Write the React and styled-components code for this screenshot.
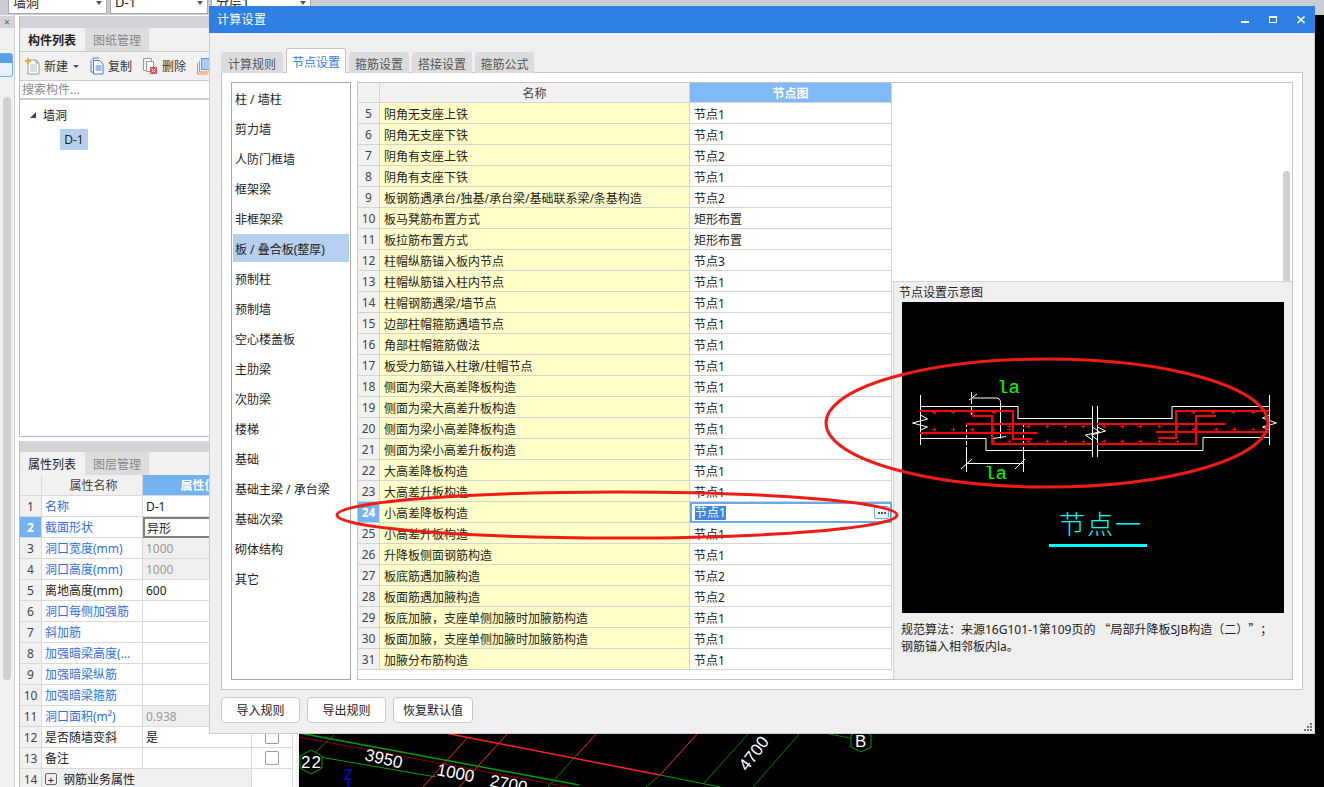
import React from "react";
import styled, { createGlobalStyle } from "styled-components";

const font = `"Noto Sans", "Noto Sans CJK SC", sans-serif`;
const cjk = `"Noto Sans CJK SC", sans-serif`;

const Global = createGlobalStyle`
  html, body { margin: 0; padding: 0; height: 100%; overflow: hidden; background: #fff; }
  * { box-sizing: border-box; }
  body { font: 12px ${font}; color: #222; }
`;

const Page = styled.div`
  position: relative;
  width: 1324px;
  height: 787px;
  overflow: hidden;
  background: #000;
  display: grid;
  grid-template-rows: 15px 1fr;
`;

const TopBar = styled.div`
  background: #c9ccd1;
  display: flex;
  gap: 3px;
  padding-left: 8px;
  overflow: hidden;
`;

const TopSelect = styled.div`
  width: ${(p) => p.$w}px;
  height: 14px;
  background: #fff;
  border: 1px solid #aaa;
  border-top: 0;
  display: flex;
  align-items: flex-end;
  justify-content: space-between;
  padding: 0 4px 5px;
  font-size: 13px;
  line-height: 12px;
  overflow: hidden;
  &::after { content: ""; border: 3px solid transparent; border-top: 4px solid #555; margin-bottom: 0; }
`;

const Body = styled.div`
  display: grid;
  grid-template-columns: 15px 281px 1fr;
  min-height: 0;
  background: #fff;
`;

const LeftRail = styled.div`
  background: #f1f1f1;
  border-right: 1px solid #d0d0d0;
  padding-top: 1px;
  display: flex;
  flex-direction: column;
  align-items: flex-start;
`;

const RailClose = styled.div`
  height: 12px;
  width: 100%;
  background: #d2d4d8;
  color: #666;
  font-size: 11px;
  line-height: 12px;
  text-align: center;
`;

const RailButton = styled.div`
  width: 13px;
  height: 24px;
  margin-top: 25px;
  border: 1px solid #6eaef0;
  border-left: 0;
  border-radius: 0 3px 3px 0;
  background: linear-gradient(#5aa0e6 0 9px, #e8f2fc 9px);
`;

const RailThumb = styled.div`
  width: 8px;
  height: 583px;
  margin: 20px 0 0 3px;
  border-radius: 4px;
  background: #d0d0d0;
`;

const Panels = styled.div`
  padding: 1px 0 0 4px;
  display: flex;
  flex-direction: column;
  background: #fff;
  min-height: 0;
`;

const PanelHeader = styled.div`
  height: ${(p) => p.$h}px;
  background: #d2d4d8;
  border-left: 1px solid #bbb;
  flex: none;
`;

const Tabs = styled.div`
  height: 23px;
  display: flex;
  align-items: stretch;
  gap: 1px;
  background: #f1f1f1;
  border-left: 1px solid #bbb;
  flex: none;
`;

const SideTab = styled.div`
  width: 64px;
  display: flex;
  align-items: center;
  justify-content: center;
  font-size: 12px;
  color: ${(p) => (p.$active ? "#222" : "#888")};
  font-weight: ${(p) => (p.$bold ? 700 : 400)};
  background: ${(p) => (p.$active ? "#f1f1f1" : "#dcdcdc")};
`;

const ListToolbar = styled.div`
  height: 30px;
  background: #f1f1f1;
  border-left: 1px solid #bbb;
  border-top: 1px solid #c8ccd4;
  border-bottom: 1px solid #c8ccd4;
  display: flex;
  align-items: center;
  padding-left: 5px;
  gap: 11px;
  font-size: 12px;
  color: #333;
  flex: none;
  overflow: hidden;
`;

const ToolItem = styled.span`
  display: inline-flex;
  align-items: center;
  gap: ${(p) => p.$gap || 4}px;
`;

const DropArrow = styled.span`
  width: 0;
  height: 0;
  margin: 1px 0 0 2px;
  border: 3px solid transparent;
  border-top: 3px solid #555;
  border-bottom: 0;
`;

const Search = styled.div`
  height: 19px;
  border-left: 1px solid #bbb;
  border-bottom: 2px solid #c8ccd4;
  color: #888;
  font-size: 12px;
  line-height: 17px;
  padding-left: 2px;
  flex: none;
`;

const Tree = styled.div`
  height: 337px;
  border-left: 1px solid #bbb;
  border-bottom: 1px solid #bbb;
  padding: 4px 0 0 10px;
  flex: none;
  font-size: 12px;
`;

const TreeRow = styled.div`
  height: 22px;
  display: flex;
  align-items: center;
  gap: 7px;
`;

const Triangle = styled.span`
  width: 0;
  height: 0;
  border-style: solid;
  border-width: 0 0 6px 6px;
  border-color: transparent transparent #444 transparent;
`;

const TreeLeaf = styled.div`
  margin: 3px 0 0 30px;
  width: 28px;
  height: 21px;
  background: #b5d0ee;
  display: flex;
  align-items: center;
  justify-content: center;
  font-size: 12px;
`;

const PanelGap = styled.div`
  height: 4px;
  background: #fff;
  flex: none;
`;

const PropTable = styled.div`
  display: grid;
  grid-template-columns: 22px 101px 109px 41px;
  grid-auto-rows: 21px;
  border-left: 1px solid #bbb;
  font-size: 12px;
  flex: none;
`;

const PropCell = styled.div`
  border-right: 1px solid #d9d9d9;
  border-bottom: 1px solid #d9d9d9;
  display: flex;
  align-items: center;
  padding-left: 3px;
  white-space: nowrap;
  overflow: hidden;
  background: ${(p) => (p.$grey ? "#efefef" : "#fff")};
  color: ${(p) => (p.$blue ? "#2f6fe0" : p.$dim ? "#9a9a9a" : "#222")};
`;

const PropIndex = styled(PropCell)`
  justify-content: center;
  padding: 0;
  background: ${(p) => (p.$active ? "#74b2f2" : "#f1f1f1")};
  color: ${(p) => (p.$active ? "#fff" : "#444")};
  font-weight: ${(p) => (p.$active ? 700 : 400)};
`;

const PropHead = styled(PropCell)`
  justify-content: center;
  background: ${(p) => (p.$active ? "#74b2f2" : "#f1f1f1")};
  color: ${(p) => (p.$active ? "#fff" : "#444")};
  font-weight: ${(p) => (p.$active ? 700 : 400)};
`;

const PropInput = styled(PropCell)`
  border: 2px solid #808080;
  border-right: 0;
  padding-left: 2px;
`;

const PropGroup = styled(PropCell)`
  grid-column: span 2;
  background: #efefef;
`;

const CheckBox = styled.span`
  width: 14px;
  height: 14px;
  margin-left: 10px;
  border: 1px solid #999;
  border-radius: 2px;
  background: #fff;
`;

const Plus = styled.span`
  width: 12px;
  height: 12px;
  border: 1px solid #666;
  border-radius: 2px;
  display: inline-flex;
  align-items: center;
  justify-content: center;
  font-size: 11px;
  line-height: 1;
  margin-right: 6px;
`;

const Canvas = styled.div`
  background: #000;
  border-left: 3px solid #f1f1f1;
  display: flex;
  align-items: flex-end;
  overflow: hidden;
`;

const Dialog = styled.div`
  position: absolute;
  left: 209px;
  top: 6px;
  width: 1106px;
  height: 728px;
  background: #efefef;
  border-right: 1px solid #c8ccd4;
  border-bottom: 1px solid #c8ccd4;
  border-left: 1px solid #c8ccd4;
  display: flex;
  flex-direction: column;
`;

const TitleBar = styled.div`
  height: 27px;
  margin: 0 -1px;
  background: #2d80e2;
  color: #fff;
  font-size: 12px;
  display: flex;
  align-items: center;
  justify-content: space-between;
  padding: 0 9px 2px 8px;
  letter-spacing: 0.3px;
  flex: none;
`;

const DialogBody = styled.div`
  flex: 1;
  padding: 15px 11px 0 11px;
  display: flex;
  flex-direction: column;
  min-height: 0;
`;

const DialogTabs = styled.div`
  display: flex;
  align-items: flex-end;
  gap: 3px;
  height: 25px;
  flex: none;
  position: relative;
  z-index: 1;
  margin-bottom: -1px;
`;

const DialogTab = styled.div`
  width: ${(p) => p.$w}px;
  height: ${(p) => (p.$active ? 25 : 21)}px;
  background: ${(p) => (p.$active ? "#fff" : "#dcdcdc")};
  color: ${(p) => (p.$active ? "#2d80e2" : "#555")};
  border: ${(p) => (p.$active ? "1px solid #c4c4c4" : "0")};
  border-bottom: 0;
  border-radius: 3px 3px 0 0;
  display: flex;
  align-items: center;
  justify-content: center;
  font-size: 12px;
  padding-top: 2px;
`;

const TabPanel = styled.div`
  height: 618px;
  background: #fff;
  border: 1px solid #c4c4c4;
  padding: 9px;
  display: grid;
  grid-template-columns: 120px 1fr;
  gap: 6px;
  flex: none;
`;

const CatList = styled.div`
  border: 1px solid #aaa;
  padding-top: 1px;
  display: flex;
  flex-direction: column;
`;

const CatItem = styled.div`
  height: 28px;
  margin: 0 1px 2px;
  flex: none;
  display: flex;
  align-items: center;
  padding: 1px 0 0 2px;
  font-size: 12px;
  background: ${(p) => (p.$active ? "#b5d0ee" : "transparent")};
`;

const RightArea = styled.div`
  border: 1px solid #c4c4c4;
  display: grid;
  grid-template-columns: 535px 1fr;
  min-height: 0;
`;

const NodeGrid = styled.div`
  display: grid;
  grid-template-columns: 22px 310px 202px;
  grid-template-rows: 20px;
  grid-auto-rows: 21px;
  align-content: start;
  font-size: 12px;
`;

const Cell = styled.div`
  border-right: 1px solid #d4d4d4;
  border-bottom: 1px solid #d4d4d4;
  display: flex;
  align-items: center;
  padding: 1px 0 0 4px;
  white-space: nowrap;
  overflow: hidden;
  background: ${(p) => (p.$yellow ? "#ffffc8" : "#fff")};
`;

const IndexCell = styled(Cell)`
  justify-content: center;
  padding: 1px 0 0;
  background: ${(p) => (p.$active ? "#74b2f2" : "#f1f1f1")};
  color: ${(p) => (p.$active ? "#fff" : "#444")};
  font-weight: ${(p) => (p.$active ? 700 : 400)};
`;

const HeadCell = styled(Cell)`
  justify-content: center;
  padding: 1px 0 0;
  background: ${(p) => (p.$active ? "#80b9f8" : "#f1f1f1")};
  color: ${(p) => (p.$active ? "#fff" : "#444")};
  font-weight: ${(p) => (p.$active ? 700 : 400)};
`;

const EditCell = styled(Cell)`
  border: 2px solid #6aaaea;
  padding: 0 1px 0 3px;
  justify-content: space-between;
`;

const Selected = styled.span`
  background: #3e88dc;
  color: #fff;
  line-height: 14px;
`;

const EllipsisButton = styled.span`
  width: 15px;
  height: 13px;
  border: 1px solid #6aaaea;
  border-radius: 2px;
  background: #eef4fb;
  display: flex;
  align-items: center;
  justify-content: center;
  gap: 1px;
  & i { width: 2px; height: 2px; background: #556; }
`;

const PreviewColumn = styled.div`
  position: relative;
  display: flex;
  flex-direction: column;
  justify-content: flex-end;
`;

const ScrollThumb = styled.div`
  position: absolute;
  right: 2px;
  top: 88px;
  width: 7px;
  height: 110px;
  border-radius: 4px 4px 0 0;
  background: #d0d0d0;
`;

const PreviewBox = styled.div`
  height: 398px;
  background: #efefef;
  border-top: 1px solid #d4d4d4;
  border-left: 1px solid #d4d4d4;
  padding: 4px 8px 0 5px;
  font-size: 12px;
`;

const PreviewTitle = styled.div`
  height: 16px;
  line-height: 14px;
`;

const Drawing = styled.svg`
  display: block;
  width: 382px;
  height: 311px;
  background: #000;
  margin-left: 3px;
`;

const DrawingLabel = styled.text`
  font-family: ${cjk};
  font-weight: 300;
  font-size: 26px;
  fill: #00ffff;
`;

const LaLabel = styled.text`
  font-family: "Liberation Mono", monospace;
  font-size: 19px;
  fill: #00ff00;
`;

const PreviewNote = styled.div`
  margin-top: 7px;
  line-height: 17px;
  white-space: nowrap;
  font-size: 12px;
  padding-left: 2px;
  text-spacing-trim: space-all;
`;

const WideMark = styled.span`
  font-family: ${cjk};
`;

const Footer = styled.div`
  display: flex;
  gap: 7px;
  padding-top: 7px;
  flex: none;
`;

const FooterButton = styled.div`
  width: ${(p) => p.$w || 79}px;
  height: 26px;
  background: #fff;
  border: 1px solid #c8c8c8;
  border-radius: 4px;
  display: flex;
  align-items: center;
  justify-content: center;
  font-size: 12px;
`;

const Grip = styled.svg`
  position: absolute;
  right: 2px;
  bottom: 2px;
`;

const Annotations = styled.svg`
  position: absolute;
  left: 0;
  top: 0;
  pointer-events: none;
`;

const nodes = [
  [5, "阴角无支座上铁", "节点1"],
  [6, "阴角无支座下铁", "节点1"],
  [7, "阴角有支座上铁", "节点2"],
  [8, "阴角有支座下铁", "节点1"],
  [9, "板钢筋遇承台/独基/承台梁/基础联系梁/条基构造", "节点2"],
  [10, "板马凳筋布置方式", "矩形布置"],
  [11, "板拉筋布置方式", "矩形布置"],
  [12, "柱帽纵筋锚入板内节点", "节点3"],
  [13, "柱帽纵筋锚入柱内节点", "节点1"],
  [14, "柱帽钢筋遇梁/墙节点", "节点1"],
  [15, "边部柱帽箍筋遇墙节点", "节点1"],
  [16, "角部柱帽箍筋做法", "节点1"],
  [17, "板受力筋锚入柱墩/柱帽节点", "节点1"],
  [18, "侧面为梁大高差降板构造", "节点1"],
  [19, "侧面为梁大高差升板构造", "节点1"],
  [20, "侧面为梁小高差降板构造", "节点1"],
  [21, "侧面为梁小高差升板构造", "节点1"],
  [22, "大高差降板构造", "节点1"],
  [23, "大高差升板构造", "节点1"],
  [24, "小高差降板构造", "节点1"],
  [25, "小高差升板构造", "节点1"],
  [26, "升降板侧面钢筋构造", "节点1"],
  [27, "板底筋遇加腋构造", "节点2"],
  [28, "板面筋遇加腋构造", "节点2"],
  [29, "板底加腋，支座单侧加腋时加腋筋构造", "节点1"],
  [30, "板面加腋，支座单侧加腋时加腋筋构造", "节点1"],
  [31, "加腋分布筋构造", "节点1"],
];

const categories = [
  "柱 / 墙柱", "剪力墙", "人防门框墙", "框架梁", "非框架梁", "板 / 叠合板(整厚)",
  "预制柱", "预制墙", "空心楼盖板", "主肋梁", "次肋梁", "楼梯", "基础",
  "基础主梁 / 承台梁", "基础次梁", "砌体结构", "其它",
];

const props = [
  ["名称", "D-1", "blue"],
  ["截面形状", "异形", "blue", "input"],
  ["洞口宽度(mm)", "1000", "blue", "dim"],
  ["洞口高度(mm)", "1000", "blue", "dim"],
  ["离地高度(mm)", "600", ""],
  ["洞口每侧加强筋", "", "blue"],
  ["斜加筋", "", "blue"],
  ["加强暗梁高度(...", "", "blue"],
  ["加强暗梁纵筋", "", "blue"],
  ["加强暗梁箍筋", "", "blue"],
  ["洞口面积(m²)", "0.938", "blue", "dim"],
  ["是否随墙变斜", "是", "", "check"],
  ["备注", "", "", "check"],
];

// rebar tick marks of the node drawing, as [y, [x...]] in drawing coords
const ticks = [
  [110.500, [32, 51, 70, 92, 291, 311, 331, 351]],
  [127.500, [32, 51, 70, 91, 107, 292, 314, 332, 351]],
  [124.500, [107, 126, 145, 163, 181, 202, 220, 238, 257, 275]],
  [139.500, [91, 107, 126, 145, 163, 181, 202, 220, 238, 257, 275]],
];

function NewIcon() {
  return (
    <svg width="16" height="18" viewBox="0 0 16 18">
      <path d="M3 3h8l3 3v11H3z" fill="#fff" stroke="#999" />
      <path d="M11 3v3h3" fill="none" stroke="#999" />
      <path d="M5 8h7M5 10h7M5 12h7M5 14h7" stroke="#bbb" />
      <path d="M0 3h2V1h2v2h2v2H4v2H2V5H0z" fill="#f5a030" />
    </svg>
  );
}

function CopyIcon() {
  return (
    <svg width="14" height="18" viewBox="0 0 14 18">
      <path d="M3 3V1h6M1 3v12h2" fill="none" stroke="#4a86d0" />
      <path d="M3.500 3.500h6l3.500 3.500v10H3.500z" fill="#fff" stroke="#3a7ccc" />
      <path d="M5.500 9h6M5.500 11h6M5.500 13h6" stroke="#3a7ccc" />
    </svg>
  );
}

function DeleteIcon() {
  return (
    <svg width="14" height="18" viewBox="0 0 14 18">
      <path d="M.5 1.500h8v12h-8z" fill="#fff" stroke="#999" />
      <path d="M3.500 4.500h7v10h-7z" fill="#fff" stroke="#999" />
      <rect x="7" y="10" width="7" height="7" fill="#e05050" />
      <path d="M8.500 11.500l4 4M12.500 11.500l-4 4" stroke="#fff" />
    </svg>
  );
}

function LayerIcon() {
  return (
    <svg width="16" height="18" viewBox="0 0 16 18">
      <path d="M.5 6v11h10" fill="none" stroke="#f08a2c" />
      <path d="M2.500 4v11h10" fill="none" stroke="#f08a2c" />
      <rect x="4.500" y="1.500" width="11" height="11" fill="#a9cdf5" stroke="#5a9ae0" />
    </svg>
  );
}

function WindowButtons() {
  return (
    <svg width="65" height="11" viewBox="0 0 65 11">
      <rect x="0" y="8" width="8" height="2" fill="#fff" />
      <path d="M28.500 4.500h7v5h-7z" fill="none" stroke="#fff" />
      <rect x="28" y="3" width="8" height="2" fill="#fff" />
      <path d="M56.500 3.500l7 6.500M63.500 3.500l-7 6.500" stroke="#fff" strokeWidth="1.600" />
    </svg>
  );
}

// CAD drawing seen below the dialog, origin at x=299, y=730
function CadBackground() {
  return (
    <svg width="1025" height="57" viewBox="0 0 1025 57">
      <g fill="none" strokeWidth="1">
        <path d="M0 3l280 52" stroke="#00a000" strokeWidth="1.500" />
        <path d="M0 7l280 52" stroke="#8a0000" />
        <path d="M146 3l215 42" stroke="#ff2020" strokeWidth="1.500" />
        <path d="M361 45l70 14" stroke="#00a000" />
        <path d="M21 27l116 20" stroke="#00a000" />
        <path d="M35 5L8 30" stroke="#008000" />
        <path d="M169 7l-45 50M209 3l-49 54M298 3l-22 24" stroke="#ff2020" />
        <path d="M276 27l-27 30" stroke="#008000" />
        <path d="M399 3l-38 42" stroke="#ff2020" />
        <path d="M361 45l-14 12M450 3l-45 50M501 3l-47 54" stroke="#008000" />
        <path d="M530 4l21 4" stroke="#008000" />
        <polygon points="12,20 23,26 23,38 12,44 1,38 1,26" stroke="#00a000" fill="#000" />
        <polygon points="562,0 572,5 572,17 562,22 552,17 552,5" stroke="#00a000" fill="#000" />
      </g>
      <g fill="#fff" fontFamily='"Liberation Sans", sans-serif' fontSize="17">
        <text x="2" y="38" textLength="20">22</text>
        <text x="65" y="30" transform="rotate(13 65 30)">3950</text>
        <text x="137" y="45" transform="rotate(11 137 45)">1000</text>
        <text x="190" y="56" transform="rotate(11 190 56)">2700</text>
        <text x="448" y="42" transform="rotate(-53 448 42)">4700</text>
        <text x="556" y="17">B</text>
      </g>
      <path d="M46 40h6l-6 9h6M49 49v8" stroke="#0000ff" strokeWidth="1.500" fill="none" />
    </svg>
  );
}

function RebarDrawing() {
  return (
    <Drawing viewBox="0 0 382 311">
      <g fill="none" stroke="#fff" strokeWidth="1">
        <path d="M18.500 93v50M367.500 93v50M190.500 104v51M195.500 104v51" />
        <path d="M18 104.500h98v12h74M18 136.500h66v12h106" />
        <path d="M195 116.500h75v-12h98M195 148.500h106v-13h67" />
        <path d="M69.500 90v23" strokeDasharray="5 2" />
        <path d="M69.500 96H94q4.500 0 4.500 4.500v36" />
        <path d="M67 98l8-6M91 136.500l13-2" />
        <path d="M64.500 121v27M121.500 121v27" strokeDasharray="4 2" />
        <path d="M64.500 148v22M121.500 148v22M64 161.500h58" />
        <path d="M59 167l11-10M113 167l10-10" />
        <path d="M18.500 113l7 4-15 4 15 4-7 3" />
        <path d="M190.500 125l7 5-14 3 7 5" />
        <path d="M195.500 125l8 4-14 4 6 5" />
        <path d="M367.500 113l-7 3 14 5-14 4 7 3" />
      </g>
      <g fill="none" stroke="#ff0000" strokeWidth="2">
        <path d="M18 109h93v28h19" />
        <path d="M70 114h20v28h100" />
        <path d="M64 122h126M18 131h117" />
        <path d="M195 122h128" />
        <path d="M195 142h99v-28h20" />
        <path d="M256 136h18v-27h93" />
        <path d="M254 130h113" />
      </g>
      <g stroke="#ff0000" strokeWidth="1">
        {ticks.map(([y, xs]) =>
          xs.map((x) => <path key={`${x}-${y}`} d={`M${x - 2} ${y}h4M${x + 0.5} ${y - 2}v4`} />)
        )}
      </g>
      <LaLabel x="95" y="91">la</LaLabel>
      <LaLabel x="82" y="177">la</LaLabel>
      <DrawingLabel x="157" y="232" letterSpacing="2">节点一</DrawingLabel>
      <rect x="147" y="242" width="98" height="3" fill="#00ffff" />
    </Drawing>
  );
}

export default function App() {
  return (
    <Page>
      <Global />
      <TopBar>
        <TopSelect $w={99}>墙洞</TopSelect>
        <TopSelect $w={98}>D-1</TopSelect>
        <TopSelect $w={100}>分层1</TopSelect>
      </TopBar>
      <Body>
        <LeftRail>
          <RailClose>×</RailClose>
          <RailButton />
          <RailThumb />
        </LeftRail>
        <Panels>
          <PanelHeader $h={12} />
          <Tabs>
            <SideTab $active $bold>构件列表</SideTab>
            <SideTab>图纸管理</SideTab>
          </Tabs>
          <ListToolbar>
            <ToolItem $gap={3}><NewIcon />新建<DropArrow /></ToolItem>
            <ToolItem><CopyIcon />复制</ToolItem>
            <ToolItem $gap={5}><DeleteIcon />删除</ToolItem>
            <LayerIcon />
          </ListToolbar>
          <Search>搜索构件...</Search>
          <Tree>
            <TreeRow><Triangle />墙洞</TreeRow>
            <TreeLeaf>D-1</TreeLeaf>
          </Tree>
          <PanelGap />
          <PanelHeader $h={11} />
          <Tabs>
            <SideTab $active>属性列表</SideTab>
            <SideTab>图层管理</SideTab>
          </Tabs>
          <PropTable>
            <PropHead />
            <PropHead>属性名称</PropHead>
            <PropHead $active>属性值</PropHead>
            <PropHead>附加</PropHead>
            {props.map(([name, value, blue, kind], i) => (
              <React.Fragment key={name}>
                <PropIndex $active={kind === "input"}>{i + 1}</PropIndex>
                <PropCell $blue={blue === "blue"}>{name}</PropCell>
                {kind === "input" ? (
                  <PropInput>{value}</PropInput>
                ) : (
                  <PropCell $grey={kind === "dim"} $dim={kind === "dim"}>{value}</PropCell>
                )}
                <PropCell>{kind === "check" && <CheckBox />}</PropCell>
              </React.Fragment>
            ))}
            <PropIndex>14</PropIndex>
            <PropGroup><Plus>+</Plus>钢筋业务属性</PropGroup>
            <PropCell />
          </PropTable>
        </Panels>
        <Canvas>
          <CadBackground />
        </Canvas>
      </Body>
      <Dialog>
        <TitleBar>
          计算设置
          <WindowButtons />
        </TitleBar>
        <DialogBody>
          <DialogTabs>
            <DialogTab $w={62}>计算规则</DialogTab>
            <DialogTab $w={60} $active>节点设置</DialogTab>
            <DialogTab $w={60}>箍筋设置</DialogTab>
            <DialogTab $w={60}>搭接设置</DialogTab>
            <DialogTab $w={59}>箍筋公式</DialogTab>
          </DialogTabs>
          <TabPanel>
            <CatList>
              {categories.map((c) => (
                <CatItem key={c} $active={c.startsWith("板 /")}>{c}</CatItem>
              ))}
            </CatList>
            <RightArea>
              <NodeGrid>
                <HeadCell />
                <HeadCell>名称</HeadCell>
                <HeadCell $active>节点图</HeadCell>
                {nodes.map(([n, name, val]) => (
                  <React.Fragment key={n}>
                    <IndexCell $active={n === 24}>{n}</IndexCell>
                    <Cell $yellow>{name}</Cell>
                    {n === 24 ? (
                      <EditCell>
                        <Selected>{val}</Selected>
                        <EllipsisButton><i /><i /><i /></EllipsisButton>
                      </EditCell>
                    ) : (
                      <Cell>{val}</Cell>
                    )}
                  </React.Fragment>
                ))}
              </NodeGrid>
              <PreviewColumn>
                <ScrollThumb />
                <PreviewBox>
                  <PreviewTitle>节点设置示意图</PreviewTitle>
                  <RebarDrawing />
                  <PreviewNote>
                    规范算法：来源16G101-1第109页的 <WideMark>“</WideMark>局部升降板SJB构造（二）<WideMark>”</WideMark>；
                    <br />
                    钢筋锚入相邻板内la。
                  </PreviewNote>
                </PreviewBox>
              </PreviewColumn>
            </RightArea>
          </TabPanel>
          <Footer>
            <FooterButton>导入规则</FooterButton>
            <FooterButton>导出规则</FooterButton>
            <FooterButton $w={80}>恢复默认值</FooterButton>
          </Footer>
        </DialogBody>
        <Grip width="9" height="9" viewBox="0 0 9 9">
          <path d="M7 1h2v2H7zM4 4h2v2H4zM7 4h2v2H7zM1 7h2v2H1zM4 7h2v2H4zM7 7h2v2H7z" fill="#777" />
        </Grip>
      </Dialog>
      <Annotations width="1324" height="787" viewBox="0 0 1324 787">
        <g fill="none" stroke="#ee1c14" strokeWidth="3">
          <ellipse cx="1047" cy="423" rx="221" ry="64" />
          <ellipse cx="617" cy="515" rx="280" ry="23" />
        </g>
      </Annotations>
    </Page>
  );
}
